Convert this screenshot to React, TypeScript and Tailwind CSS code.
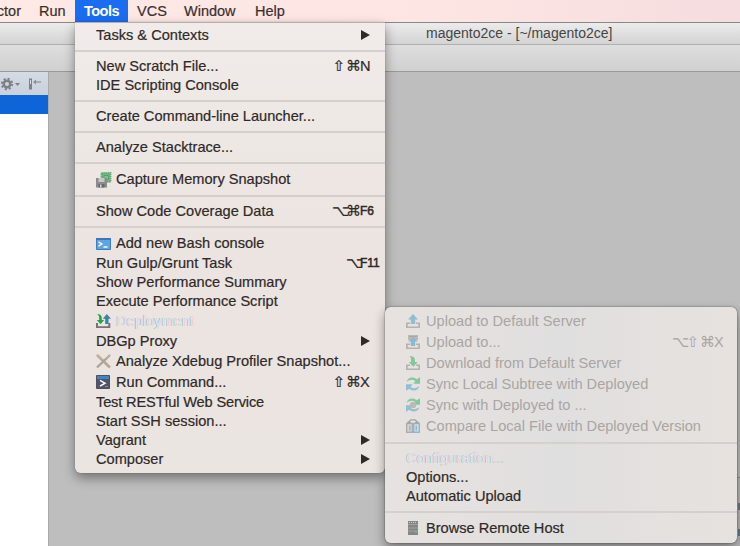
import React from "react";

type IconName =
  | "memory" | "bash" | "deploy" | "cross" | "command" | "upload" | "uploadTo"
  | "download" | "sync" | "syncTo" | "compare" | "host";

type Item = {
  label: string;
  icon?: IconName;
  keys?: string;
  fn?: string;
  arrow?: boolean;
  state?: "disabled" | "ghost";
  track?: string;
};

function Tray({ c }: { c: string }) {
  return <path d="M0 8.500h4v1.600H1.700v2.300h10.600v-2.300H10V8.500h4V14H0z" fill={c} />;
}

const glyphs: Record<IconName, React.ReactNode> = {
  memory: (
    <>
      <path d="M5.500 .9h9v9h-9z" fill="#6fb981" stroke="#62a775" strokeWidth="1.800" strokeDasharray="1.300 .7" />
      <path d="M8 3.500h4.500v4H8z" fill="#7cc48d" stroke="#4d9d66" strokeWidth=".8" />
      <path d="M0 6h11v9.500H0z" fill="#8b8b8b" />
      <path d="M2.500 6h6v4h-6z" fill="#c8c7c6" />
      <path d="M2.500 12h6v3.500h-6z" fill="#696969" />
      <path d="M4 12.500h1.500v3H4z" fill="#d6d6d6" />
    </>
  ),
  bash: (
    <>
      <path d="M.5 2.500h14v11H.5z" fill="#5ea3e5" stroke="#3d7cbd" />
      <path d="M0 2h15v2H0z" fill="#3976bb" />
      <path d="m2.500 5.800 3.300 2.200-3.300 2.200M7.500 11h4" fill="none" stroke="#fff" strokeWidth="1.400" />
    </>
  ),
  deploy: (
    <>
      <path d="M0 9h2v3.200h10.300V9h2v5H0z" fill="#7c7170" />
      <path d="M1 0c3 0 4.800 1.500 4.800 4v2h2.400L4.500 10.300.8 6h2.400V4C3.200 2.200 2.500 1 1 0z" fill="#27a14b" />
      <path d="M10.800 0 15 4.800h-2.500V10H9.200V4.800H6.800z" fill="#3d83a6" />
    </>
  ),
  cross: (
    <>
      <path d="m1 1 13 12.500" stroke="#b8a594" strokeWidth="2.600" />
      <path d="M14 1 1 13.500" stroke="#aaa29b" strokeWidth="2.400" />
      <path d="m1 .5 5 5M14 .5l-4 4" stroke="#d0bda9" />
    </>
  ),
  command: (
    <>
      <path d="M.5.5h13v13H.5z" fill="#50536a" stroke="#51505a" />
      <path d="M1 1h12v3H1z" fill="#4083c5" />
      <path d="m4 5.300 5 2.900-5 2.900" fill="none" stroke="#fff" strokeWidth="1.500" />
      <path d="M9 11.500h3" stroke="#898b98" />
    </>
  ),
  upload: (
    <>
      <Tray c="#b5b1b0" />
      <path d="m7 0 5 5.500H9.200V10H4.800V5.500H2z" fill="#91bdd3" />
    </>
  ),
  uploadTo: (
    <>
      <path d="M2 0h10v5H2z" fill="#bbb8b6" />
      <path d="M3 1.500h8" stroke="#aaa7a5" />
      <Tray c="#b5b1b0" />
      <path d="m7 2 5 4.500H9.200V11H4.800V6.500H2z" fill="#8cb9d0" />
    </>
  ),
  download: (
    <>
      <Tray c="#b5b1b0" />
      <path d="M3.500 0c3.600 0 5.500 1.600 5.500 4v2h2.800L7.300 10.700 2.800 6H5V4c0-1.900-.3-3-1.500-4z" fill="#83c79b" />
    </>
  ),
  sync: <SyncArrows />,
  syncTo: (
    <>
      <SyncArrows />
      <circle cx="7" cy="7" r="3.200" fill="#bdb9b8" />
    </>
  ),
  compare: (
    <>
      <path d="M.7 4.500h5.600v8.800H.7z" fill="#ded9d7" stroke="#aeabab" strokeWidth="1.400" />
      <path d="M7.700 4.500h5.600v8.800H7.700z" fill="#d8e0e6" stroke="#89b8d1" strokeWidth="1.400" />
      <path d="M3.700 6.500v5M10.300 6.500v5" stroke="#8cb9d0" strokeWidth="1.600" />
      <path d="M3 4.500V2.500L5 .8h4l2 1.700v2M1.300 3.500h3.500M9.200 3.500h3.500" fill="none" stroke="#a5a2a1" strokeWidth="1.300" />
    </>
  ),
  host: (
    <>
      <path d="M2 0h10v14H2z" fill="#858585" />
      <path d="M2 3.500h10M2 7h10M2 10h10" stroke="#a8a8a8" strokeWidth=".8" />
      <path d="M3 1.500h8" stroke="#d0d0d0" strokeDasharray="1 1" />
      <path d="M9 10.500h2v1.500H9z" fill="#46d27a" />
    </>
  ),
};

function SyncArrows() {
  return (
    <>
      <path d="M.5 5C2 0 7-.8 10.800 2.300L14 .3V6.800H7.500L9.300 4C6.500 2 3.500 2.700.5 5z" fill="#83c99e" />
      <path d="M13.500 9C12 14 7 14.800 3.200 11.700L0 13.700V7.200h6.500L4.700 10c2.800 2 5.800 1.300 8.800-1z" fill="#92bfd4" />
    </>
  );
}

function Icon({ name }: { name: IconName }) {
  return (
    <svg className="mr-1 h-4 w-4 shrink-0 overflow-visible" viewBox="0 0 16 16">
      {glyphs[name]}
    </svg>
  );
}

function Row({ item, keyColumn }: { item: Item; keyColumn: string }) {
  const tone =
    item.state === "disabled"
      ? "text-[#aaa5a3]"
      : item.state === "ghost"
        ? "text-[#ebe5e3] [text-shadow:-0.8px_0_0_#86c4e8,0.8px_0_0_#f6c6c6]"
        : "text-[#2f2927] [-webkit-text-stroke:0.2px]";
  return (
    <div className={`flex items-center pl-[21px] ${item.icon ? "h-[21px]" : "h-[19px]"} ${tone}`}>
      {item.icon && <Icon name={item.icon} />}
      <span className={item.track ?? ""}>{item.label}</span>
      {item.keys && (
        <span className="ml-auto flex items-center">
          {[...item.keys].map((key) => (
            <span key={key} className="w-[14px] text-center font-['DejaVu_Sans',sans-serif] text-[15px] leading-none">
              {key}
            </span>
          ))}
          <span className={`${keyColumn} ${item.fn && item.fn.length > 1 ? "text-[12px] [-webkit-text-stroke:0.5px]" : ""}`}>
            {item.fn}
          </span>
        </span>
      )}
      {item.arrow && (
        <svg className="mr-[15px] mb-px ml-auto h-[10px] w-[9px]" viewBox="0 0 9 10">
          <path d="M0 0 9 5 0 10z" fill="#2f2927" />
        </svg>
      )}
    </div>
  );
}

function Menu({ groups, keyColumn }: { groups: Item[][]; keyColumn: string }) {
  return (
    <>
      {groups.map((group, i) => (
        <React.Fragment key={i}>
          {i > 0 && (
            <div className="py-[5px]">
              <div className="h-0.5 bg-[#d5cfcd]" />
            </div>
          )}
          {group.map((item) => (
            <Row key={item.label} item={item} keyColumn={keyColumn} />
          ))}
        </React.Fragment>
      ))}
    </>
  );
}

const tools: Item[][] = [
  [{ label: "Tasks & Contexts", arrow: true }],
  [{ label: "New Scratch File...", keys: "⇧⌘", fn: "N" }, { label: "IDE Scripting Console" }],
  [{ label: "Create Command-line Launcher..." }],
  [{ label: "Analyze Stacktrace..." }],
  [{ label: "Capture Memory Snapshot", icon: "memory" }],
  [{ label: "Show Code Coverage Data", keys: "⌥⌘", fn: "F6" }],
  [
    { label: "Add new Bash console", icon: "bash" },
    { label: "Run Gulp/Grunt Task", keys: "⌥", fn: "F11" },
    { label: "Show Performance Summary" },
    { label: "Execute Performance Script" },
    { label: "Deployment", icon: "deploy", state: "ghost" },
    { label: "DBGp Proxy", arrow: true },
    { label: "Analyze Xdebug Profiler Snapshot...", icon: "cross" },
    { label: "Run Command...", icon: "command", keys: "⇧⌘", fn: "X" },
    { label: "Test RESTful Web Service", track: "tracking-[-0.15px]" },
    { label: "Start SSH session..." },
    { label: "Vagrant", arrow: true },
    { label: "Composer", arrow: true },
  ],
];

const deployment: Item[][] = [
  [
    { label: "Upload to Default Server", icon: "upload", state: "disabled" },
    { label: "Upload to...", icon: "uploadTo", state: "disabled", keys: "⌥⇧⌘", fn: "X" },
    { label: "Download from Default Server", icon: "download", state: "disabled" },
    { label: "Sync Local Subtree with Deployed", icon: "sync", state: "disabled" },
    { label: "Sync with Deployed to ...", icon: "syncTo", state: "disabled" },
    { label: "Compare Local File with Deployed Version", icon: "compare", state: "disabled" },
  ],
  [{ label: "Configuration...", state: "ghost" }, { label: "Options..." }, { label: "Automatic Upload" }],
  [{ label: "Browse Remote Host", icon: "host" }],
];

export default function App() {
  return (
    <div className="relative flex h-[546px] w-[740px] flex-col overflow-hidden bg-[#bebebe] font-['Liberation_Sans',Arial,sans-serif] text-[14.6px] leading-[19px] whitespace-nowrap text-[#3b2f2e]">
      <nav className="flex h-[22px] shrink-0 bg-linear-to-r from-[#fde9e5] via-[#fde5e3] via-60% to-[#f5dde0] text-[14.5px] [-webkit-text-stroke:0.2px]">
        <div className="flex w-[21px] items-center justify-end">ctor</div>
        <div className="flex w-[54px] items-center pl-[18px]">Run</div>
        <div className="flex w-[53px] items-center justify-center bg-[#1a6df1] font-bold text-white tracking-[-0.5px] [-webkit-text-stroke:0]">Tools</div>
        <div className="flex w-[47px] items-center pl-[9px]">VCS</div>
        <div className="flex w-[71px] items-center pl-[9px]">Window</div>
        <div className="flex items-center pl-[9px]">Help</div>
      </nav>
      <header className="flex h-[23px] shrink-0 items-center border-y border-t-[#8b8787] border-b-[#b0b0b0] bg-linear-to-b from-[#ececec] to-[#d3d3d3] pl-[426px] text-[14px] text-[#454545]">
        <span>magento2ce - [~/magento2ce]</span>
      </header>
      <div className="h-[27px] shrink-0 border-b border-[#989a98] bg-linear-to-b from-[#dedede] to-[#d0d0d0]" />
      <main className="flex grow">
        <aside className="flex w-[49px] flex-col border-r border-[#aaa] bg-white">
          <div className="flex h-[23px] items-center bg-linear-to-b from-[#d3dbe5] to-[#c9d1dc]">
            <svg className="h-[22px] w-[48px]" viewBox="0 0 48 22">
              <circle cx="7" cy="11" r="3.300" fill="none" stroke="#7f8184" strokeWidth="2.600" />
              <circle cx="7" cy="11" r="5.200" fill="none" stroke="#7f8184" strokeWidth="2" strokeDasharray="2.040 2.040" />
              <path d="M15 10h5l-2.500 3z" fill="#7f8184" />
              <path d="M29 5.500h3v11h-3z" fill="#7f8184" />
              <path d="M30 7h1v4h-1z" fill="#d5dce5" />
              <path d="M34 9h7" stroke="#8d9095" strokeWidth="1.200" />
              <path d="m33 9 3-2.500v5z" fill="#8d9095" />
            </svg>
          </div>
          <div className="h-[19px] bg-[#0d65d8]" />
        </aside>
        <div className="flex grow flex-col items-end pt-[405px]">
          <div className="flex h-[69px] w-[3px] flex-col items-end gap-[19px] border-t border-[#969696] bg-[#b9b9b9] pt-[25px]">
            <div className="h-[7px] w-0.5 bg-[#6d7785]" />
            <div className="h-[7px] w-0.5 bg-[#627991]" />
          </div>
        </div>
      </main>

      <div className="absolute top-[22px] left-[75px] w-[310px] rounded-b-[6px] border-t border-[#b8b0af] bg-linear-to-b from-[#f1ece9] via-[#ebe4e1] to-[#ebe5e1] pt-[3px] pb-1 shadow-[0_5px_12px_rgba(0,0,0,0.4),0_0_1px_rgba(0,0,0,0.5)]">
        <Menu groups={tools} keyColumn="w-[25px]" />
      </div>
      <div className="absolute top-[307px] left-[385px] w-[352px] rounded-[6px] bg-linear-to-r from-[#e7e2df] via-[#e0dfdf] to-[#e7e2de] py-1 shadow-[0_5px_12px_rgba(0,0,0,0.4),0_0_1.5px_rgba(0,0,0,0.7)]">
        <Menu groups={deployment} keyColumn="w-[23px]" />
      </div>
    </div>
  );
}
